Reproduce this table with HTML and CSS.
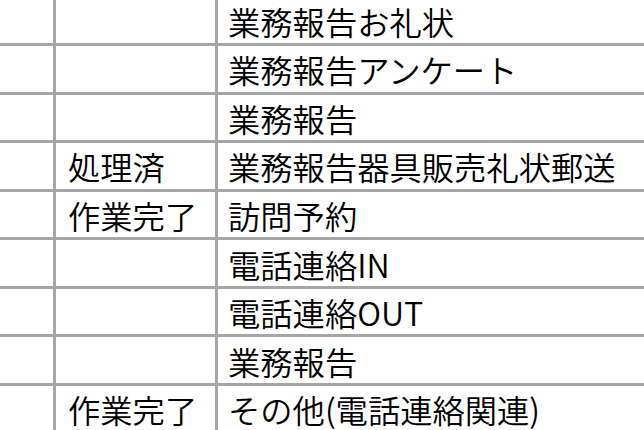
FILE: index.html
```html
<!DOCTYPE html>
<html lang="ja">
<head>
<meta charset="utf-8">
<title>業務一覧</title>
<link rel="stylesheet" href="styles.css">
</head>
<body>
<div class="grid">
  <div class="row"><div class="cell c1"></div><div class="cell c2"></div><div class="cell c3">業務報告お礼状</div></div>
  <div class="row"><div class="cell c1"></div><div class="cell c2"></div><div class="cell c3">業務報告アンケート</div></div>
  <div class="row"><div class="cell c1"></div><div class="cell c2"></div><div class="cell c3">業務報告</div></div>
  <div class="row"><div class="cell c1"></div><div class="cell c2">処理済</div><div class="cell c3">業務報告器具販売礼状郵送</div></div>
  <div class="row"><div class="cell c1"></div><div class="cell c2">作業完了</div><div class="cell c3">訪問予約</div></div>
  <div class="row"><div class="cell c1"></div><div class="cell c2"></div><div class="cell c3">電話連絡IN</div></div>
  <div class="row"><div class="cell c1"></div><div class="cell c2"></div><div class="cell c3">電話連絡OUT</div></div>
  <div class="row"><div class="cell c1"></div><div class="cell c2"></div><div class="cell c3">業務報告</div></div>
  <div class="row"><div class="cell c1"></div><div class="cell c2">作業完了</div><div class="cell c3">その他(電話連絡関連)</div></div>
</div>
</body>
</html>
```
FILE: styles.css
```css
html, body {
  margin: 0;
  padding: 0;
  background: #ffffff;
  overflow: hidden;
}
body {
  font-family: "Noto Sans CJK JP", "Noto Sans", sans-serif;
  color: #000000;
}
.grid {
  margin-top: -2.6px;
  width: 644px;
}
.row {
  display: flex;
  height: 48.57px;
  box-sizing: border-box;
  border-bottom: 3px solid #a6a6a6;
}
.cell {
  display: flex;
  align-items: center;
  box-sizing: border-box;
  font-size: 32.3px;
  font-weight: 350;
  line-height: normal;
  padding-top: 1px;
  white-space: nowrap;
}
.c1 {
  width: 56px;
  flex: none;
  border-right: 3px solid #a6a6a6;
}
.c2 {
  width: 162px;
  flex: none;
  border-right: 3px solid #a6a6a6;
  padding-left: 12px;
}
.c3 {
  flex: 1;
  padding-left: 10px;
}
```
